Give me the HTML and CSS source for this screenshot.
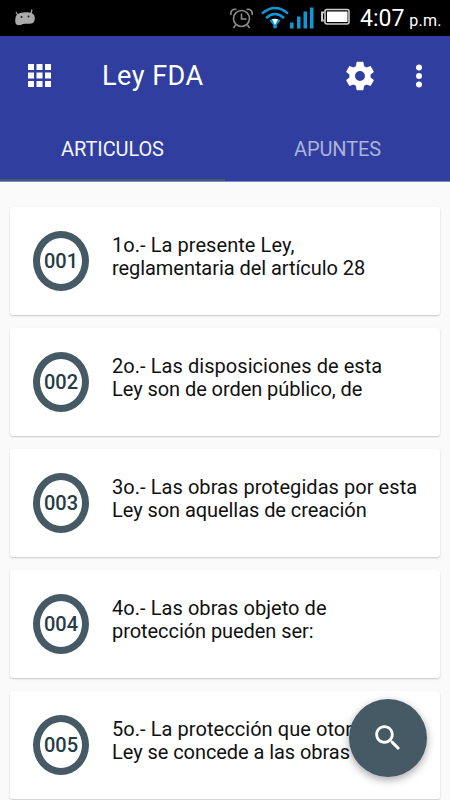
FILE: index.html
```html
<!DOCTYPE html>
<html lang="es">
<head>
<meta charset="utf-8">
<title>Ley FDA</title>
<link rel="stylesheet" href="styles.css">
</head>
<body>
<div class="screen">
  <div class="status">
    <svg class="droid" width="22" height="18" viewBox="0 0 22 18"><path d="M2 3l2 3.500M18 .5l-1 4" stroke="#aaa" stroke-width="1.200"/><path d="M1.500 9C2 5 5 4 9 3.500c5-.8 10-.5 11.500 3.500 1 4-.5 7-3 7.500-3 .4-6 0-8.500.5-1.500 1-3 1-5 1C1 16 1 12 1.500 9z" fill="#aaa"/><circle cx="7.500" cy="8" r="1" fill="#222"/><circle cx="14.500" cy="7.500" r="1" fill="#222"/></svg>
    <svg class="indicators" width="122" height="30" viewBox="0 0 122 30">
      <g fill="none" stroke="#8c8c8c" stroke-width="1.600"><circle cx="11.500" cy="17.500" r="8"/><path d="M11.500 12.500v5.500h5M5.500 24l-2 3M17.500 24l2 3M1 14C0 10 3 7.500 6.500 8.500M22 14c1-4-2-6.500-5.500-5.500"/></g>
      <g fill="none" stroke="#0b98dc" stroke-width="2.500"><path d="M32 12.500Q45 1.500 58 12.500M36 17Q45 9 54 17"/></g>
      <path d="M39.500 19.500Q45 15.500 50.500 19.500L45 26z" fill="#0b98dc"/><path d="M42 18h6l-3 6z" fill="#fff"/><circle cx="45" cy="25.500" r="2" fill="#0b98dc"/>
      <path d="M60 21.500h3.500v6H60zM67 15.500h3.500v12H67zM73.500 10.500H77v17h-3.500zM80 6.500h3.500v21H80z" fill="#0b98dc"/>
      <path d="M94 11.500h-2v8h2" fill="none" stroke="#ccc" stroke-width="2"/>
      <rect x="95" y="8.500" width="24" height="14.500" rx="2" fill="none" stroke="#ccc" stroke-width="1.600"/><rect x="97" y="10.500" width="20.500" height="10.500" fill="#fff"/>
    </svg>
    <span class="clock">4:07</span><span class="period">p.m.</span>
  </div>
  <header>
    <div class="toolbar">
      <svg class="apps" width="24" height="24" viewBox="0 0 24 24" fill="#fff"><path d="M0 0h6v6H0zM8.500 0h6v6h-6zM17 0h6v6h-6zM0 8.500h6v6H0zM8.500 8.500h6v6h-6zM17 8.500h6v6h-6zM0 17h6v6H0zM8.500 17h6v6h-6zM17 17h6v6h-6z"/></svg>
      <h1>Ley FDA</h1>
      <svg class="gear" width="34" height="34" viewBox="0 0 24 24" fill="#fff"><path d="M19.430 12.980c.04-.32.070-.64.070-.98s-.03-.66-.07-.98l2.110-1.650c.19-.15.240-.42.120-.64l-2-3.460c-.12-.22-.39-.3-.61-.22l-2.490 1c-.52-.4-1.080-.73-1.690-.98l-.38-2.650C14.460 2.180 14.250 2 14 2h-4c-.25 0-.46.180-.49.420l-.38 2.650c-.61.250-1.170.590-1.690.98l-2.490-1c-.23-.09-.49 0-.61.220l-2 3.460c-.13.220-.07.490.120.640l2.110 1.650c-.04.320-.07.650-.07.980s.030.660.070.980l-2.110 1.650c-.19.150-.24.420-.12.640l2 3.460c.12.220.39.300.610.220l2.490-1c.52.400 1.080.730 1.690.980l.38 2.650c.03.240.240.420.490.420h4c.25 0 .46-.18.490-.42l.38-2.650c.61-.25 1.170-.59 1.690-.98l2.490 1c.23.090.490 0 .610-.22l2-3.460c.12-.22.070-.49-.12-.64l-2.110-1.650zM12 15.500c-1.930 0-3.500-1.570-3.500-3.500s1.570-3.500 3.500-3.500 3.500 1.570 3.500 3.500-1.570 3.500-3.500 3.500z"/></svg>
      <svg class="more" width="8" height="26" viewBox="0 0 8 26" fill="#fff"><circle cx="4" cy="4.500" r="3"/><circle cx="4" cy="13" r="3"/><circle cx="4" cy="21.500" r="3"/></svg>
    </div>
    <nav><span class="tab active">ARTICULOS</span><span class="tab">APUNTES</span></nav>
  </header>
  <main>
    <article><div class="badge">001</div><p>1o.- La presente Ley,<br>reglamentaria del artículo 28</p></article>
    <article><div class="badge">002</div><p>2o.- Las disposiciones de esta<br>Ley son de orden público, de</p></article>
    <article><div class="badge">003</div><p>3o.- Las obras protegidas por esta<br>Ley son aquellas de creación</p></article>
    <article><div class="badge">004</div><p>4o.- Las obras objeto de<br>protección pueden ser:</p></article>
    <article><div class="badge">005</div><p>5o.- La protección que otorga<br>Ley se concede a las obras</p></article>
  </main>
  <div class="fab"><svg width="34" height="34" viewBox="0 0 24 24" fill="#fff"><path d="M15.500 14h-.79l-.28-.27C15.410 12.590 16 11.110 16 9.500 16 5.910 13.090 3 9.500 3S3 5.910 3 9.500 5.910 16 9.500 16c1.610 0 3.090-.59 4.230-1.570l.27.280v.79l5 4.990L20.490 19l-4.990-5zm-6 0C7.010 14 5 11.990 5 9.500S7.010 5 9.500 5 14 7.010 14 9.500 11.990 14 9.500 14z"/></svg></div>
</div>
</body>
</html>
```
FILE: styles.css
```css
* { box-sizing: border-box; }
body { margin: 0; font-family: Roboto, "Liberation Sans", sans-serif; }
.screen { position: relative; width: 450px; height: 800px; overflow: hidden; background: #fafafa; }
.status { display: flex; height: 36px; background: #000; color: #fff; }
.droid { margin: 9px 0 0 14px; }
.indicators { margin: 1px 0 0 194px; }
.clock { margin-left: 8px; font-size: 23px; line-height: 37px; letter-spacing: 0; }
.period { margin-left: 5px; font-size: 16px; line-height: 41px; letter-spacing: .2px; white-space: nowrap; }
header { height: 146px; background: #303f9f; color: #fff; border-bottom: 1px solid #7d86bf; }
.toolbar { display: flex; align-items: center; height: 79px; padding-left: 28px; }
.apps { margin-top: 1px; }
h1 { width: 240px; margin: 0 0 0 50px; font-size: 27px; font-weight: 400; line-height: 32px; letter-spacing: .5px; }
.gear { margin-left: 1px; }
.more { margin-left: 38px; }
nav { display: flex; height: 66px; }
.tab { flex: 1; padding-top: 20px; border-bottom: 2px solid #303f9f; text-align: center; font-size: 20px; line-height: 28px; letter-spacing: -.1px; color: #acb2d9; }
.tab.active { color: #f5f5fc; border-color: #455a64; }
main { display: flex; flex-direction: column; gap: 13px; padding: 25px 10px 0 10px; }
article { display: flex; flex: none; height: 108px; padding: 24px 0 0 23px; border-radius: 3px; background: #fff; box-shadow: 0 1px 2px rgba(0,0,0,.2); }
.badge { width: 56px; height: 60px; border: 7px solid #455a64; border-radius: 50%; display: flex; align-items: center; justify-content: center; color: #263c47; font-size: 20px; font-weight: 500; }
p { margin: 3px 0 0 23px; font-size: 20px; line-height: 22.500px; letter-spacing: -.06px; color: #111; white-space: nowrap; }
p::first-line { letter-spacing: .06px; }
.fab { position: absolute; left: 349px; top: 699px; width: 78px; height: 78px; border-radius: 50%; background: #455a64; display: flex; align-items: center; justify-content: center; box-shadow: 0 3px 8px rgba(0,0,0,.35); }
```
